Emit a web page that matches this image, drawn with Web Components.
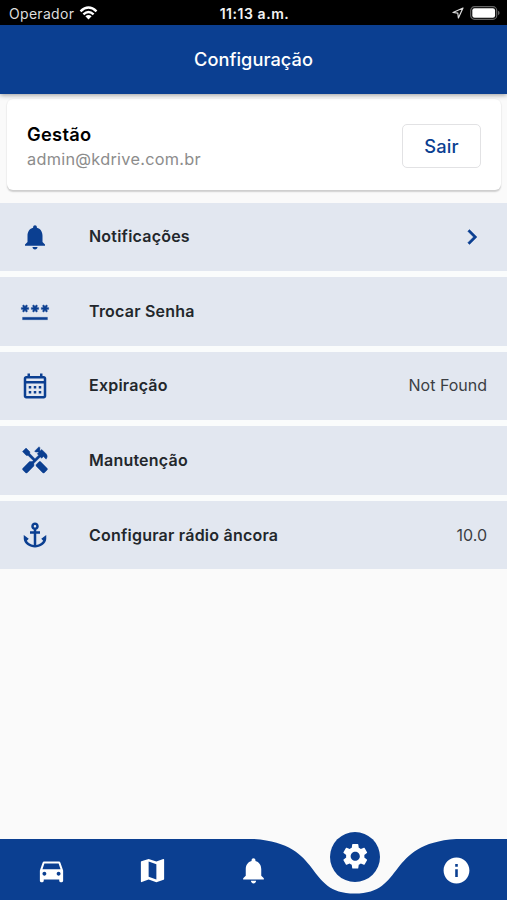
<!DOCTYPE html>
<html lang="pt">
<head>
<meta charset="utf-8">
<title>Configuração</title>
<style>
html,body{margin:0;height:100%}
body{font-family:Inter,"Liberation Sans",sans-serif;background:#fafafa;overflow:hidden}
</style>
</head>
<body>
<app-screen>
  <status-bar slot="top"></status-bar>
  <app-header slot="top">Configuração</app-header>
  <account-card><span slot="name">Gestão</span><span slot="email">admin@kdrive.com.br</span><span slot="action">Sair</span></account-card>
  <settings-list>
    <settings-row icon="bell">Notificações<ui-icon slot="value" name="chevron"></ui-icon></settings-row>
    <settings-row icon="password">Trocar Senha</settings-row>
    <settings-row icon="calendar">Expiração<span slot="value">Not Found</span></settings-row>
    <settings-row icon="tools">Manutenção</settings-row>
    <settings-row icon="anchor">Configurar rádio âncora<span slot="value">10.0</span></settings-row>
  </settings-list>
  <nav-bar slot="bottom"></nav-bar>
</app-screen>
<script>
const ICONS={
 bell:'<path d="M12 22c1.1 0 2-.9 2-2h-4c0 1.1.89 2 2 2zm6-6v-5c0-3.07-1.64-5.64-4.5-6.32V4c0-.83-.67-1.5-1.5-1.5s-1.5.67-1.5 1.5v.68C7.63 5.36 6 7.92 6 11v5l-2 2v1h16v-1l-2-2z"/>',
 password:'<path d="M2 17h20v2H2v-2zm1.15-4.05L4 11.47l.85 1.48 1.3-.75-.85-1.48H7v-1.5H5.3l.85-1.47L4.85 7 4 8.47 3.15 7l-1.3.75.85 1.47H1v1.5h1.7l-.85 1.48 1.3.75zm6.7-.75 1.3.75.85-1.48.85 1.48 1.3-.75-.85-1.48H15v-1.5h-1.7l.85-1.47-1.3-.75L12 8.47 11.15 7l-1.3.75.85 1.47H9v1.5h1.7l-.85 1.48zM23 9.22h-1.7l.85-1.47-1.3-.75L20 8.47 19.15 7l-1.3.75.85 1.47H17v1.5h1.7l-.85 1.48 1.3.75.85-1.48.85 1.48 1.3-.75-.85-1.48H23v-1.5z" stroke="currentColor" stroke-width=".2"/>',
 calendar:'<path transform="translate(0 .9)" d="M7 11h2v2H7v-2m14-6v14c0 1.11-.89 2-2 2H5c-1.11 0-2-.9-2-2V5c0-1.1.9-2 2-2h1V1h2v2h8V1h2v2h1c1.11 0 2 .9 2 2M5 7h14V5H5v2m14 12V9H5v10h14m-4-6v-2h2v2h-2m-4 0v-2h2v2h-2m-4 2h2v2H7v-2m8 2v-2h2v2h-2m-4 0v-2h2v2h-2z"/>',
 tools:'<g transform="translate(0 .4)" stroke="currentColor" stroke-width=".35"><path d="M21.67 18.17l-5.3-5.3h-.99l-2.54 2.54v.99l5.3 5.3c.39.39 1.02.39 1.41 0l2.12-2.12a1 1 0 0 0 0-1.41z"/><path d="M17.34 10.19l1.41-1.41 2.12 2.12c1.17-1.17 1.17-3.07 0-4.24l-3.54-3.54-1.41 1.41V1.71L15.22 1l-3.54 3.54.71.71h2.83l-1.41 1.41 1.06 1.06-2.89 2.89-4.13-4.13V5.06L4.83 2.04 2 4.87 5.03 7.9h1.41l4.13 4.13-.85.85H7.6l-5.3 5.3a1 1 0 0 0 0 1.41l2.12 2.12c.39.39 1.02.39 1.41 0l5.3-5.3v-2.12l5.15-5.15z"/></g>',
 anchor:'<path d="M17 15l1.55 1.55c-.96 1.69-3.33 3.04-5.55 3.37V11h3V9h-3V7.82C14.16 7.4 15 6.3 15 5c0-1.65-1.35-3-3-3S9 3.35 9 5c0 1.3.84 2.4 2 2.82V9H8v2h3v8.92c-2.22-.33-4.59-1.68-5.55-3.37L7 15l-4-3v3c0 3.88 4.92 7 9 7s9-3.12 9-7v-3l-4 3zM12 4c.55 0 1 .45 1 1s-.45 1-1 1-1-.45-1-1 .45-1 1-1z"/>',
 chevron:'<path d="M10 6L8.59 7.41 13.17 12l-4.58 4.59L10 18l6-6z" stroke="currentColor" stroke-width=".3"/>',
 car:'<path d="M18.92 6.01C18.72 5.42 18.16 5 17.5 5h-11c-.66 0-1.21.42-1.42 1.01L3 12v8c0 .55.45 1 1 1h1c.55 0 1-.45 1-1v-1h12v1c0 .55.45 1 1 1h1c.55 0 1-.45 1-1v-8l-2.08-5.99zM6.5 16c-.83 0-1.5-.67-1.5-1.5S5.67 13 6.5 13s1.5.67 1.5 1.5S7.33 16 6.5 16zm11 0c-.83 0-1.5-.67-1.5-1.5s.67-1.5 1.5-1.5 1.5.67 1.5 1.5-.67 1.5-1.5 1.5zM5 11l1.5-4.5h11L19 11H5z"/>',
 map:'<path d="M20.5 3l-.16.03L15 5.1 9 3 3.36 4.9c-.21.07-.36.25-.36.48V20.5c0 .28.22.5.5.5l.16-.03L9 18.9l6 2.1 5.64-1.9c.21-.07.36-.25.36-.48V3.5c0-.28-.22-.5-.5-.5zM15 19l-6-2.11V5l6 2.11V19z"/>',
 info:'<path d="M12 2C6.48 2 2 6.48 2 12s4.48 10 10 10 10-4.48 10-10S17.52 2 12 2zm1 15h-2v-6h2v6zm0-8h-2V7h2v2z"/>',
 gear:'<path d="M19.14 12.94c.04-.3.06-.61.06-.94 0-.32-.02-.64-.07-.94l2.03-1.58c.18-.14.23-.41.12-.61l-1.92-3.32c-.12-.22-.37-.29-.59-.22l-2.39.96c-.5-.38-1.03-.7-1.62-.94L14.4 2.81c-.04-.24-.24-.41-.48-.41h-3.84c-.24 0-.43.17-.47.41l-.36 2.54c-.59.24-1.13.57-1.62.94l-2.39-.96c-.22-.08-.47 0-.59.22L2.74 8.87c-.12.21-.08.47.12.61l2.03 1.58c-.05.3-.09.63-.09.94s.02.64.07.94l-2.03 1.58c-.18.14-.23.41-.12.61l1.92 3.32c.12.22.37.29.59.22l2.39-.96c.5.38 1.03.7 1.62.94l.36 2.54c.05.24.24.41.48.41h3.84c.24 0 .44-.17.47-.41l.36-2.54c.59-.24 1.13-.56 1.62-.94l2.39.96c.22.08.47 0 .59-.22l1.92-3.32c.12-.22.07-.47-.12-.61l-2.01-1.58zM12 15.6c-1.98 0-3.6-1.62-3.6-3.6s1.62-3.6 3.6-3.6 3.6 1.62 3.6 3.6-1.62 3.6-3.6 3.6z"/>'
};
function define(name,html){
  customElements.define(name,class extends HTMLElement{
    constructor(){super();this.attachShadow({mode:'open'}).innerHTML=typeof html==='function'?html(this):html;}
  });
}
define('ui-icon',el=>`<style>:host{display:block;width:var(--size,30px);height:var(--size,30px);flex:none}svg{display:block;width:100%;height:100%;fill:currentColor}</style><svg viewBox="0 0 24 24">${ICONS[el.getAttribute('name')]}</svg>`);
define('app-screen',`<style>:host{display:flex;flex-direction:column;height:100vh;min-height:900px}header{position:relative;z-index:1}main{flex:1}</style><header><slot name="top"></slot></header><main><slot></slot></main><slot name="bottom"></slot>`);
define('status-bar',`<style>
:host{display:grid;grid-template-columns:1fr auto 1fr;align-items:center;height:25px;padding:2px 7px 0 9px;box-sizing:border-box;background:#000;color:#f2f2f2;font-size:14px;line-height:20px}
div{display:flex;align-items:center}.a{gap:5px;color:#ddd;letter-spacing:.3px}.b{font-weight:600;letter-spacing:.55px;font-size:14px}.c{justify-content:flex-end;gap:6px}svg{display:block}
svg{margin-top:-2px}
</style>
<div class="a"><span>Operador</span><svg width="19" height="14" viewBox="0 0 18 14" fill="none" stroke="#fff" stroke-width="2.4"><path d="M1 5.3Q9-2.2 17 5.3M3.9 8.3q5.1-4.6 10.2 0"/><path d="M9 13.5 5.9 10.3q3.1-2.6 6.2 0Z" fill="#fff" stroke="none"/></svg></div>
<div class="b">11:13 a.m.</div>
<div class="c"><svg width="12" height="12" viewBox="0 0 12 12" fill="none" stroke="#ddd" stroke-width="1.2" stroke-linejoin="round"><path d="M11 1 1 5.5l4.8.7.6 4.8Z"/></svg><svg width="30" height="14" viewBox="0 0 30 14"><rect x=".7" y=".7" width="26" height="12.6" rx="3.8" fill="none" stroke="#666" stroke-width="1.2"/><rect x="2.3" y="2.3" width="22.8" height="9.4" rx="2.2" fill="#fff"/><path d="M28 4.8q1.6.6 1.6 2.2T28 9.2Z" fill="#666"/></svg></div>`);
define('app-header',`<style>:host{display:flex;align-items:center;justify-content:center;height:68.5px;background:#0b3f91;color:#fff;font-weight:500;font-size:18.2px;letter-spacing:.06px;box-shadow:0 1px 5px rgba(0,0,0,.4)}</style><slot></slot>`);
define('account-card',`<style>
:host{display:flex;align-items:center;justify-content:space-between;box-sizing:border-box;height:91px;margin:5.5px 6px 12.7px 7px;padding:6px 20px 4px;background:#fff;border-radius:6px;box-shadow:0 1.5px 1.5px rgba(0,0,0,.17),0 0 2px rgba(0,0,0,.05)}
.t{padding-top:3px}.n{font-size:18.3px;line-height:25px;font-weight:600;color:#000;letter-spacing:.3px}.e{font-size:16.3px;line-height:25px;color:#8c8c8c;letter-spacing:.28px}
button{all:unset;box-sizing:border-box;width:79px;height:44px;border:1.3px solid #e2e2e4;border-radius:5px;text-align:center;color:#0b3f91;font-size:18.3px;font-weight:500;letter-spacing:.1px}
</style><div class="t"><div class="n"><slot name="name"></slot></div><div class="e"><slot name="email"></slot></div></div><button><slot name="action"></slot></button>`);
define('settings-list',`<style>:host{display:grid;grid-auto-rows:68.4px;gap:6.15px;background:#fafcfc}</style><slot></slot>`);
define('settings-row',el=>`<style>
:host{display:grid;grid-template-columns:69px 1fr auto;align-items:center;padding:0 20px;background:#e2e7f0;color:#23272c;font-size:16px}
ui-icon{color:#0b3f91}.t{font-weight:600;letter-spacing:.22px;margin-top:-1px}.v{letter-spacing:0;color:#3b3e43;margin-top:-1px}::slotted(ui-icon){color:#0b3f91;margin-top:2px}
</style><ui-icon name="${el.getAttribute('icon')}"></ui-icon><div class="t"><slot></slot></div><div class="v"><slot name="value"></slot></div>`);
define('nav-bar',`<style>
:host{display:grid;grid-template-columns:repeat(5,1fr);place-items:center;position:relative;height:61px;color:#fff;--size:31px}
.bg{position:absolute;inset:0;width:100%;height:61px}ui-icon{position:relative;margin:1px 0 0 1px}
.fab{position:relative;align-self:start;margin-top:-7.3px;width:50px;height:50px;border-radius:50%;background:#0b3f91;display:grid;place-items:center}
.fab ui-icon{margin:0;--size:30.5px}
</style><svg class="bg" viewBox="0 0 507 61" preserveAspectRatio="none"><path fill="#0b3f91" d="M0 0H253.5C324.5 4.55 304.2 54.6 354.9 54.6C405.6 54.6 385.3 4.55 456.3 0H507V61H0Z"/></svg>
<ui-icon name="car"></ui-icon><ui-icon name="map"></ui-icon><ui-icon name="bell"></ui-icon><div class="fab"><ui-icon name="gear"></ui-icon></div><ui-icon name="info"></ui-icon>`);
</script>
</body>
</html>
